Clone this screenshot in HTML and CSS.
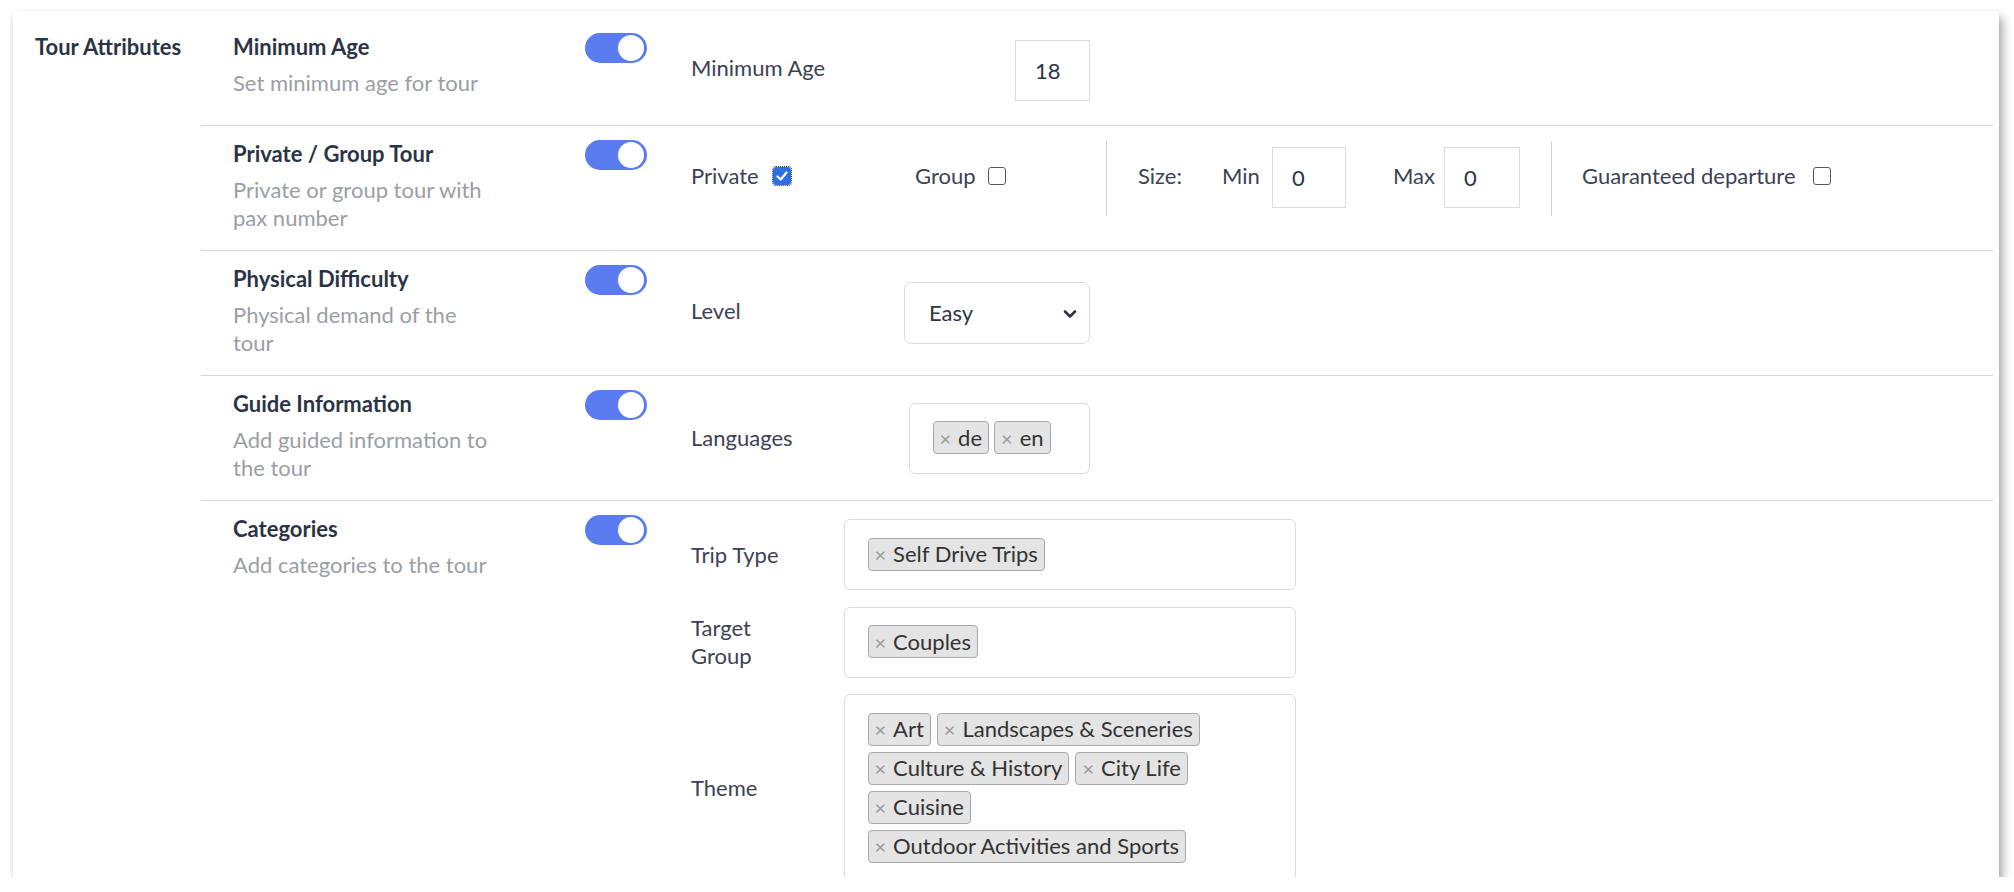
FILE: index.html
```html
<!DOCTYPE html>
<html>
<head>
<meta charset="utf-8">
<link rel="stylesheet" href="styles.css">
</head>
<body>
<div class="card">
  <div class="group-label">Tour Attributes</div>
  <div class="sections">

    <div class="row row-age">
      <div class="info">
        <div class="text">
          <div class="title">Minimum Age</div>
          <div class="sub">Set minimum age for tour</div>
        </div>
        <span class="toggle"><span class="knob"></span></span>
      </div>
      <div class="content c-age">
        <div class="lbl w-age">Minimum Age</div>
        <div class="num num-age">18</div>
      </div>
    </div>

    <div class="row">
      <div class="info">
        <div class="text">
          <div class="title">Private / Group Tour</div>
          <div class="sub">Private or group tour with pax number</div>
        </div>
        <span class="toggle"><span class="knob"></span></span>
      </div>
      <div class="content c-pax">
        <div class="opt opt-private"><span class="lbl">Private</span><span class="chk on"><svg viewBox="0 0 16 16" width="16" height="16"><polyline points="3.5,8.5 6.8,11.5 12.5,4.5" fill="none" stroke="#fff" stroke-width="2.2" stroke-linecap="round" stroke-linejoin="round"/></svg></span></div>
        <div class="opt opt-group"><span class="lbl">Group</span><span class="chk"></span></div>
        <div class="vsep"></div>
        <div class="opt opt-size"><span class="lbl">Size:</span></div>
        <div class="opt opt-min"><span class="lbl">Min</span></div>
        <div class="num num-min">0</div>
        <div class="opt opt-max"><span class="lbl">Max</span></div>
        <div class="num num-max">0</div>
        <div class="vsep sep2"></div>
        <div class="opt opt-guar"><span class="lbl">Guaranteed departure</span><span class="chk"></span></div>
      </div>
    </div>

    <div class="row">
      <div class="info">
        <div class="text">
          <div class="title">Physical Difficulty</div>
          <div class="sub">Physical demand of the tour</div>
        </div>
        <span class="toggle"><span class="knob"></span></span>
      </div>
      <div class="content">
        <div class="lbl w-level">Level</div>
        <div class="select"><span>Easy</span><svg class="chev" viewBox="0 0 14 10" width="14" height="10"><polyline points="2,2.5 7,7.5 12,2.5" fill="none" stroke="#2b3445" stroke-width="2.6" stroke-linecap="round" stroke-linejoin="round"/></svg></div>
      </div>
    </div>

    <div class="row">
      <div class="info">
        <div class="text">
          <div class="title">Guide Information</div>
          <div class="sub">Add guided information to the tour</div>
        </div>
        <span class="toggle"><span class="knob"></span></span>
      </div>
      <div class="content">
        <div class="lbl w-lang">Languages</div>
        <div class="multi multi-lang">
          <span class="tag"><span class="x">×</span>de</span>
          <span class="tag"><span class="x">×</span>en</span>
        </div>
      </div>
    </div>

    <div class="row row-last">
      <div class="info">
        <div class="text">
          <div class="title">Categories</div>
          <div class="sub">Add categories to the tour</div>
        </div>
        <span class="toggle"><span class="knob"></span></span>
      </div>
      <div class="content c-cat">
        <div class="field">
          <div class="lbl w-cat">Trip Type</div>
          <div class="multi multi-cat">
            <span class="tag"><span class="x">×</span>Self Drive Trips</span>
          </div>
        </div>
        <div class="field">
          <div class="lbl w-cat">Target Group</div>
          <div class="multi multi-cat">
            <span class="tag"><span class="x">×</span>Couples</span>
          </div>
        </div>
        <div class="field">
          <div class="lbl w-cat">Theme</div>
          <div class="multi multi-cat">
            <span class="tag"><span class="x">×</span>Art</span>
            <span class="tag"><span class="x">×</span>Landscapes &amp; Sceneries</span>
            <span class="tag"><span class="x">×</span>Culture &amp; History</span>
            <span class="tag"><span class="x">×</span>City Life</span>
            <span class="tag"><span class="x">×</span>Cuisine</span>
            <span class="tag"><span class="x">×</span>Outdoor Activities and Sports</span>
          </div>
        </div>
      </div>
    </div>

  </div>
</div>
</body>
</html>
```

FILE: styles.css
```css
html, body {
  margin: 0;
  padding: 0;
  background: #ffffff;
}
body {
  font-family: Lato, "Liberation Sans", sans-serif;
  font-size: 22px;
  line-height: 28px;
  color: #3c4253;
}
.card {
  margin: 11px 0 0 13px;
  width: 1986px;
  height: 866px;
  box-sizing: border-box;
  padding-top: 8px;
  background: #fff;
  overflow: hidden;
  display: flex;
  align-items: flex-start;
  box-shadow: 4px 7px 9px rgba(0, 0, 0, 0.32), 0 0 5px rgba(0, 0, 0, 0.08);
}
.group-label {
  width: 188px;
  box-sizing: border-box;
  padding: 14px 0 0 22px;
  font-weight: 700;
  color: #2b3445;
  flex: none;
}
.sections {
  flex: 1;
  margin-right: 6px;
}
.row {
  display: flex;
  border-bottom: 1px solid #d6d6d6;
}
.row-last {
  border-bottom: none;
}
.info {
  width: 490px;
  flex: none;
  box-sizing: border-box;
  padding: 14px 0 18px 32px;
  display: flex;
  align-items: flex-start;
}
.text {
  width: 352px;
}
.title {
  font-weight: 700;
  color: #2b3445;
}
.sub {
  margin-top: 8px;
  width: 265px;
  color: #9a9ea6;
}
.toggle {
  width: 62px;
  height: 30px;
  box-sizing: border-box;
  border-radius: 15px;
  background: #5a7cf0;
  border: 2px solid #5a7cf0;
  display: flex;
  justify-content: flex-end;
  align-items: center;
  padding-right: 1px;
  flex: none;
}
.knob {
  width: 26px;
  height: 26px;
  border-radius: 50%;
  background: #fff;
}
.content {
  flex: 1;
  display: flex;
  align-items: center;
}
.c-age {
  padding: 21px 0 24px;
}
.c-age .lbl {
  padding-bottom: 5px;
}
.lbl {
  color: #3c4253;
}
.w-age { width: 324px; }
.w-level { width: 213px; padding-bottom: 4px; }
.w-lang { width: 218px; }
.w-cat { width: 100px; margin-right: 53px; }

.num {
  width: 75px;
  height: 61px;
  box-sizing: border-box;
  border: 1.5px solid #dcdcdc;
  padding-left: 19px;
  display: flex;
  align-items: center;
  color: #2b3445;
}
.num-min { width: 74px; }
.num-max { width: 76px; }

.c-pax {
  align-items: flex-start;
  padding-top: 15px;
}
.c-pax > * {
  height: 75px;
  flex: none;
}
.opt {
  display: flex;
  align-items: center;
  box-sizing: border-box;
  padding-bottom: 5px;
}
.c-pax > .num {
  height: 61px;
  margin-top: 6px;
}
.opt-private { width: 224px; }
.opt-group { width: 191px; }
.opt-size { width: 115px; padding-left: 31px; }
.opt-min { width: 50px; }
.opt-max { width: 51px; margin-left: 47px; }
.opt-guar { padding-left: 30px; }
.vsep {
  width: 1px;
  background: #cfcfcf;
}
.sep2 { margin-left: 31px; }

.chk {
  width: 18px;
  height: 18px;
  box-sizing: border-box;
  border: 1.6px solid #55596a;
  border-radius: 3px;
  margin-left: 14px;
  background: #fff;
  display: flex;
  align-items: center;
  justify-content: center;
}
.opt-group .chk { margin-left: 12px; }
.opt-guar .chk { margin-left: 17px; }
.chk.on {
  background: #2f6fe4;
  border: 1px solid #2f6fe4;
  outline: 1px dotted #333;
  outline-offset: 0;
}
.chk.on svg { display: block; }

.select {
  width: 186px;
  height: 62px;
  box-sizing: border-box;
  border: 1.5px solid #dcdcdc;
  border-radius: 7px;
  padding: 0 12px 0 24px;
  display: flex;
  align-items: center;
  justify-content: space-between;
  color: #2b3445;
}
.chev { display: block; margin-top: 2px; }

.multi {
  box-sizing: border-box;
  border: 1.5px solid #dcdcdc;
  border-radius: 6px;
  padding: 17.5px 22px 17.5px 22.5px;
  display: flex;
  flex-wrap: wrap;
  gap: 6px 5px;
  align-content: flex-start;
}
.multi-lang {
  width: 181px;
  height: 71px;
}
.multi-cat {
  width: 452px;
  min-height: 71px;
  gap: 6px 6px;
}
.tag {
  display: inline-flex;
  align-items: center;
  height: 33px;
  box-sizing: border-box;
  background: #e4e4e4;
  border: 1px solid #a9a9a9;
  border-radius: 4px;
  padding: 0 6px 0 6px;
  color: #333;
  white-space: nowrap;
}
.tag .x {
  color: #999;
  font-size: 20px;
  margin-right: 7px;
}
.c-cat {
  display: block;
  padding-top: 18px;
}
.field {
  display: flex;
  align-items: center;
  margin-bottom: 16.5px;
}
```
